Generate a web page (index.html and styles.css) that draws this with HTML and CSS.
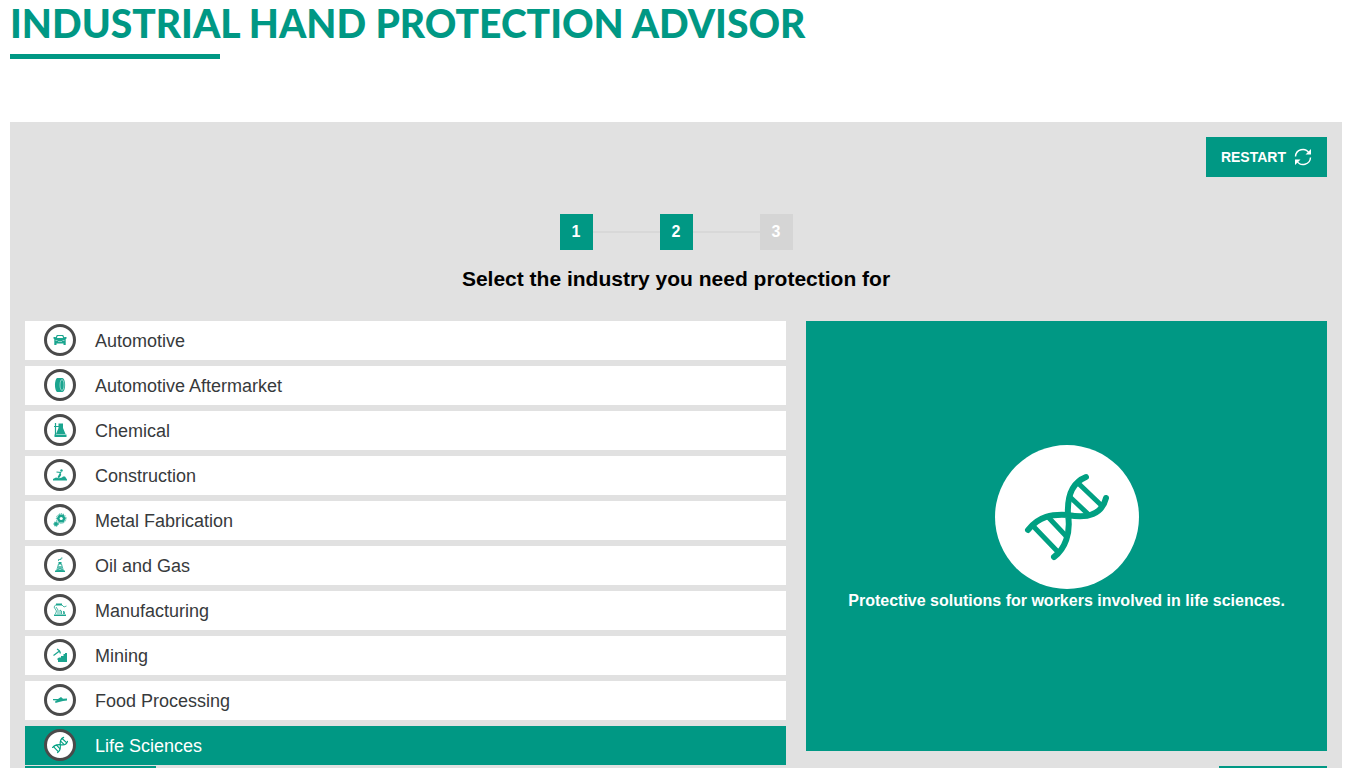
FILE: index.html
```html
<!DOCTYPE html>
<html lang="en">
<head>
  <meta charset="UTF-8">
  <title>Industrial Hand Protection Advisor</title>
  <meta name="viewport" content="width=device-width, initial-scale=1.0">
  <link rel="stylesheet" href="styles.css">
</head>
<body>

  <header class="page-header">
    <h1>Industrial Hand Protection Advisor</h1>
  </header>

  <main class="advisor">
    <div class="toolbar">
      <button type="button" class="btn restart">
        Restart
        <svg viewBox="0 0 18 18" width="18" height="18" fill="none" stroke="currentColor" stroke-width="1.4">
          <path d="M1.500 8.500A7.300 7.300 0 0 1 15 5M16.500 9.500A7.300 7.300 0 0 1 3 13"/>
          <path d="M17 1v5.500h-5.500zM1 17v-5.500h5.500z" fill="currentColor" stroke="none"/>
        </svg>
      </button>
    </div>

    <ol class="steps">
      <li class="step done">1</li>
      <li class="step done">2</li>
      <li class="step">3</li>
    </ol>

    <h2>Select the industry you need protection for</h2>

    <div class="columns">
      <div class="industries">
        <button type="button" class="industry">
          <span class="icon"><svg viewBox="3 3 26 26">
            <path class="line" d="M12 14.500l1.200-3h5.600l1.200 3"/>
            <path d="M9.500 13h2l.8 1h7.400l.8-1h2v1.500l-.8.800V21h-2.200v-1.500h-7V21h-2.200v-5.700l-.8-.8z"/>
            <path class="cut" d="M11.500 16.500h2M18.500 16.500h2M14 17.500h4"/>
          </svg></span>
          Automotive
        </button>
        <button type="button" class="industry">
          <span class="icon"><svg viewBox="3 3 26 26">
            <path d="M13 9h5.500c3.500 1 3.500 13 0 14H13c-2.700-2-2.700-12 0-14z"/>
            <ellipse class="cut" cx="18" cy="16" rx="2" ry="5.500"/>
          </svg></span>
          Automotive Aftermarket
        </button>
        <button type="button" class="industry">
          <span class="icon"><svg viewBox="3 3 26 26">
            <path d="M14.500 9.500h4.500v4.500l2.500 6h-9.500l2.500-6zM10.500 20.500h12V23h-12z"/>
            <path class="line" d="M11.500 9v13M10 12.500h9"/>
          </svg></span>
          Chemical
        </button>
        <button type="button" class="industry">
          <span class="icon"><svg viewBox="3 3 26 26">
            <path d="M9 21.500V20l3-1.500 3 .8 3-.8 1-1h2l2 3v1z"/>
            <circle cx="17.500" cy="11.500" r="1.200"/>
            <path class="line" d="M12.500 13l4 .5v2.500l-2 3M17 13l-3 5.500"/>
          </svg></span>
          Construction
        </button>
        <button type="button" class="industry">
          <span class="icon"><svg viewBox="3 3 26 26">
            <path d="M15 10.500h4.500l2.300 4-2.300 4H15l-2.300-4z"/>
            <circle class="teeth" cx="17.200" cy="14.500" r="4.800"/>
            <circle class="hole" cx="17.200" cy="14.500" r="1.600"/>
            <circle cx="12" cy="20" r="2"/>
            <circle class="teeth" cx="12" cy="20" r="2.300"/>
          </svg></span>
          Metal Fabrication
        </button>
        <button type="button" class="industry">
          <span class="icon"><svg viewBox="3 3 26 26">
            <path d="M14.500 13h3v2.500h-3zM11 21.500h10V23H11z"/>
            <path class="line thin" d="M14.500 15l-2 7M17.500 15l2 7M14 17l4 2-5 2 6 1M18 17l-4 2 5 2-6 1M14.500 12v-1.500H17V9h1.500"/>
          </svg></span>
          Oil and Gas
        </button>
        <button type="button" class="industry">
          <span class="icon"><svg viewBox="3 3 26 26">
            <path d="M10 20.500h12V22H10z"/>
            <path d="M12 9.500h6v2h-6z"/>
            <path class="line thin" d="M11.500 20l1-3-2.500-4 2-2.500M12 13l2 3v4M18 11l2 2 2.500-1M16 20v-4l1.500 1v3M19.500 20v-3l1 1v2"/>
          </svg></span>
          Manufacturing
        </button>
        <button type="button" class="industry">
          <span class="icon"><svg viewBox="3 3 26 26">
            <path d="M23 14v9h-9v-2l-1-1 2-1.500h2V17h2.500v-2H21v-1z"/>
            <path class="line" d="M13 10c2.200 1 3.300 2.500 3.300 4.500M15.500 12L9.500 16.500"/>
          </svg></span>
          Mining
        </button>
        <button type="button" class="industry">
          <span class="icon"><svg viewBox="3 3 26 26">
            <path d="M9 15h5l3-2 2 1.700 4-.2v2l-4 .5-4 1-3.500 1-.5-1.500 2-1-4-.3z"/>
          </svg></span>
          Food Processing
        </button>
        <button type="button" class="industry selected">
          <span class="icon"><svg viewBox="4 4 136 136">
            <g class="dna">
              <path d="M91 32C76 38 72 52 73 70C76 88 70 104 59 112M33 85C44 71 57 69 73 70C93 74 107 69 111 53"/>
              <path d="M39 82l24 25M54 73l17 18M75 52l18 17M83 38l23 22"/>
            </g>
          </svg></span>
          Life Sciences
        </button>
      </div>

      <section class="detail">
        <svg class="detail-icon" viewBox="0 0 144 144">
          <g class="dna">
            <path d="M91 32C76 38 72 52 73 70C76 88 70 104 59 112M33 85C44 71 57 69 73 70C93 74 107 69 111 53"/>
            <path class="rungs" d="M39 82l24 25M54 73l17 18M75 52l18 17M83 38l23 22"/>
          </g>
        </svg>
        <p>Protective solutions for workers involved in life sciences.</p>
      </section>
    </div>

    <div class="actions">
      <button type="button" class="btn previous">Previous</button>
      <button type="button" class="btn next">Next</button>
    </div>
  </main>

</body>
</html>
```

FILE: styles.css
```css
* {
  margin: 0;
  padding: 0;
  box-sizing: border-box;
}

body {
  padding: 0 4px 0 10px;
  background: #fff;
  color: #000;
  font-family: "Liberation Sans", Arial, sans-serif;
}

button {
  border: none;
  font-family: inherit;
  cursor: pointer;
}

.page-header {
  margin-bottom: 63px;
}

h1 {
  color: #009884;
  font-family: Lato, sans-serif;
  font-size: 39px;
  font-weight: 900;
  line-height: 46px;
  text-transform: uppercase;
}

h1::after {
  content: "";
  display: block;
  width: 210px;
  height: 5px;
  margin-top: 8px;
  background: #009884;
}

.advisor {
  padding: 15px;
  background: #e1e1e1;
}

.toolbar {
  display: flex;
  justify-content: flex-end;
}

.btn {
  height: 40px;
  padding: 0 15px;
  background: #009884;
  color: #fff;
  font-size: 14px;
  font-weight: bold;
  text-transform: uppercase;
}

.restart {
  display: flex;
  align-items: center;
  gap: 8px;
}

.steps {
  display: flex;
  justify-content: center;
  gap: 67px;
  margin-top: 37px;
  list-style: none;
}

.step {
  position: relative;
  width: 33px;
  background: #d5d5d5;
  color: #fff;
  font-size: 16px;
  font-weight: bold;
  line-height: 36px;
  text-align: center;
}

/* connector to the previous step */
.step + .step::before {
  content: "";
  position: absolute;
  top: 17px;
  right: 100%;
  width: 67px;
  height: 2px;
  background: #d8d8d8;
}

.step.done {
  background: #009884;
}

h2 {
  margin: 17px 0 30px;
  font-size: 21px;
  line-height: 24px;
  text-align: center;
}

.columns {
  display: grid;
  grid-template-columns: 3fr 2fr;
  align-items: start;
}

.industries {
  display: flex;
  flex-direction: column;
  gap: 6px;
  padding-right: 20px;
}

.industry {
  display: flex;
  align-items: flex-start;
  gap: 19px;
  height: 39px;
  padding: 3px 19px;
  background: #fff;
  color: #373a3c;
  font-size: 18px;
  line-height: 34px;
  text-align: left;
}

.industry.selected {
  background: #009884;
  color: #fff;
}

.icon {
  flex: none;
  width: 32px;
  height: 32px;
  border: 3px solid #4a4a4a;
  border-radius: 50%;
  background: #fff;
}

.icon svg {
  display: block;
  fill: #1ba58f;
}

.icon .line {
  fill: none;
  stroke: #1ba58f;
  stroke-width: 1.2;
}

.icon .thin {
  stroke-width: 0.8;
}

.icon .cut {
  fill: none;
  stroke: #fff;
  stroke-width: 0.5;
}

.icon .hole {
  fill: #fff;
}

.icon .teeth {
  fill: none;
  stroke: #1ba58f;
  stroke-width: 1;
  stroke-dasharray: 1 1;
}

.dna {
  fill: none;
  stroke: #00a082;
  stroke-width: 6;
  stroke-linecap: round;
}

.dna .rungs {
  stroke-width: 5;
}

.detail {
  display: flex;
  flex-direction: column;
  align-items: center;
  justify-content: center;
  min-height: 430px;
  padding: 0 20px 14px;
  background: #009884;
  color: #fff;
  text-align: center;
}

.detail-icon {
  width: 144px;
  height: 144px;
  border-radius: 50%;
  background: #fff;
}

.detail p {
  font-size: 16px;
  font-weight: bold;
  line-height: 24px;
}

.actions {
  display: flex;
  justify-content: space-between;
  margin-top: 1px;
}

.previous {
  width: 131px;
}

.next {
  width: 108px;
}
```
